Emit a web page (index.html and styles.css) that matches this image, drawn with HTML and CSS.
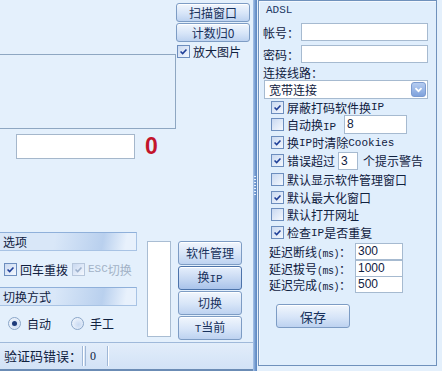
FILE: index.html
```html
<!DOCTYPE html>
<html lang="zh">
<head>
  <meta charset="UTF-8" />
  <title>ADSL</title>
  <link rel="stylesheet" href="styles.css">
</head>
<body>
  <div class="app">
    <div class="left">
      <div class="top">
        <div class="preview-wrap"><div class="preview"></div></div>
        <div class="tools">
          <button class="btn btn-top">扫描窗口</button>
          <button class="btn btn-top">计数归0</button>
          <label class="check"><span class="cb on"><svg viewBox="0 0 13 13"><path d="M3 6.5l2.5 2.5 4.5-5" /></svg></span>放大图片</label>
        </div>
      </div>

      <div class="count-row">
        <div class="code-input"></div>
        <span class="count">0</span>
      </div>

      <div class="bottom">
        <div class="groups">
          <div class="group-head">选项</div>
          <div class="group-body">
            <label class="check"><span class="cb on"><svg viewBox="0 0 13 13"><path d="M3 6.5l2.5 2.5 4.5-5" /></svg></span>回车重拨</label>
            <label class="check disabled"><span class="cb on"><svg viewBox="0 0 13 13"><path d="M3 6.5l2.5 2.5 4.5-5" /></svg></span><span class="mono">ESC</span>切换</label>
          </div>
          <div class="group-head">切换方式</div>
          <div class="group-body radios">
            <label class="radio"><span class="rb on"></span>自动</label>
            <label class="radio"><span class="rb"></span>手工</label>
          </div>
        </div>
        <div class="tall-box"></div>
        <div class="side-buttons">
          <button class="btn">软件管理</button>
          <button class="btn default">换<span class="mono">IP</span></button>
          <button class="btn">切换</button>
          <button class="btn"><span class="mono">T</span>当前</button>
        </div>
      </div>

      <div class="status">
        <div class="cell cell-label">验证码错误：</div>
        <div class="cell cell-num">0</div>
        <div class="cell cell-rest"></div>
      </div>
    </div>

    <div class="splitter"><div class="grip"></div></div>

    <div class="right">
      <div class="title mono">ADSL</div>
      <div class="field"><span class="label">帐号：</span><div class="input wide"></div></div>
      <div class="field"><span class="label">密码：</span><div class="input wide"></div></div>
      <div class="line-label">连接线路：</div>
      <div class="select">
        <span>宽带连接</span>
        <span class="drop"><svg viewBox="0 0 15 15"><path d="M4 6l3.5 3.5 3.5-3.5" /></svg></span>
      </div>

      <div class="options">
        <label class="check r1"><span class="cb on"><svg viewBox="0 0 13 13"><path d="M3 6.5l2.5 2.5 4.5-5" /></svg></span>屏蔽打码软件换<span class="mono">IP</span></label>
        <label class="check r2"><span class="cb"></span><span class="w-auto">自动换<span class="mono">IP</span></span><span class="input num-8">8</span></label>
        <label class="check r3"><span class="cb on"><svg viewBox="0 0 13 13"><path d="M3 6.5l2.5 2.5 4.5-5" /></svg></span>换<span class="mono">IP</span>时清除<span class="mono">Cookies</span></label>
        <label class="check r4"><span class="cb on"><svg viewBox="0 0 13 13"><path d="M3 6.5l2.5 2.5 4.5-5" /></svg></span>错误超过<span class="input num-3">3</span>个提示警告</label>
        <label class="check r5"><span class="cb"></span>默认显示软件管理窗口</label>
        <label class="check r6"><span class="cb on"><svg viewBox="0 0 13 13"><path d="M3 6.5l2.5 2.5 4.5-5" /></svg></span>默认最大化窗口</label>
        <label class="check r7"><span class="cb"></span>默认打开网址</label>
        <label class="check r8"><span class="cb on"><svg viewBox="0 0 13 13"><path d="M3 6.5l2.5 2.5 4.5-5" /></svg></span>检查<span class="mono">IP</span>是否重复</label>
      </div>

      <div class="delays">
        <div class="delay"><span class="delay-label">延迟断线<span class="mono ms">(ms)</span>：</span><span class="input">300</span></div>
        <div class="delay"><span class="delay-label">延迟拔号<span class="mono ms">(ms)</span>：</span><span class="input">1000</span></div>
        <div class="delay"><span class="delay-label">延迟完成<span class="mono ms">(ms)</span>：</span><span class="input">500</span></div>
      </div>

      <button class="btn save">保存</button>
    </div>
  </div>
</body>
</html>
```

FILE: styles.css
```css
body {
  margin: 0;
  width: 442px;
  height: 371px;
  overflow: hidden;
  background: #e4f0fc;
  font-family: "Noto Sans CJK SC", sans-serif;
  font-size: 12px;
  color: #10213f;
  white-space: nowrap;
}
.mono {
  font-family: "Liberation Mono", "Noto Sans CJK SC", monospace;
  font-size: 11px;
}
.app {
  display: flex;
  height: 371px;
}
.left {
  width: 253px;
  display: flex;
  flex-direction: column;
}
.top {
  display: flex;
  height: 130px;
}
.preview-wrap {
  width: 176px;
  padding-top: 54px;
}
.preview {
  height: 73px;
  border: 1px solid #8ea7c2;
  border-left: none;
}
.tools {
  width: 74px;
  padding-top: 3px;
  display: flex;
  flex-direction: column;
}
.btn {
  font-family: "Noto Sans CJK SC", sans-serif;
  font-size: 12px;
  color: #17315c;
  border: 1px solid #7d9cc4;
  border-radius: 3px;
  background: linear-gradient(#f1f6fd, #d7e5f8 55%, #bdd2f0);
  padding: 0;
  line-height: 1;
  box-sizing: border-box;
  box-shadow: inset 0 1px 0 #fff;
}
.btn-top {
  height: 19px;
  margin-bottom: 1px;
}
.check {
  display: flex;
  align-items: center;
}
.tools .check {
  margin-top: 1px;
  padding-left: 1px;
  height: 14px;
}
.cb {
  width: 11px;
  height: 11px;
  border: 1px solid #6d8ebe;
  background: linear-gradient(135deg, #c9d9f1, #f4f8fe);
  margin-right: 3px;
  flex: none;
  display: flex;
}
.cb svg {
  width: 11px;
  height: 11px;
}
.cb path {
  fill: none;
  stroke: #1f3f98;
  stroke-width: 1.8;
}
.count-row {
  display: flex;
  align-items: center;
  padding-left: 16px;
  margin-top: 3px;
  height: 26px;
}
.code-input {
  width: 117px;
  height: 23px;
  background: #fff;
  border: 1px solid #a5b7cb;
}
.count {
  margin-left: 10px;
  font-family: "Liberation Sans", sans-serif;
  font-weight: bold;
  font-size: 23px;
  color: #c3152b;
}
.bottom {
  display: flex;
  margin-top: 73px;
  height: 109px;
}
.groups {
  width: 137px;
}
.group-head {
  height: 17px;
  line-height: 17px;
  padding-left: 3px;
  border-top: 1px solid #8fb0da;
  border-bottom: 1px solid #a8c3e4;
  border-right: 1px solid #a8c3e4;
  background: linear-gradient(100deg, #d9e7f8 40%, #b9d0ee 75%, #e8f1fc 92%);
}
.group-body {
  height: 36px;
  display: flex;
  align-items: center;
  padding-left: 4px;
  gap: 4px;
}
.group-body .check.disabled {
  color: #a2b2c6;
}
.disabled .cb {
  border-color: #b7c7dc;
}
.disabled .cb path {
  stroke: #9cb0cc;
}
.radios {
  height: 35px;
  padding-left: 8px;
  gap: 20px;
}
.radio {
  display: flex;
  align-items: center;
}
.rb {
  width: 11px;
  height: 11px;
  border: 1px solid #8aa6c8;
  border-radius: 50%;
  background: radial-gradient(circle at 60% 60%, #c9daf2, #fafcff);
  margin-right: 6px;
  position: relative;
}
.rb.on::after {
  content: "";
  position: absolute;
  left: 3px;
  top: 3px;
  width: 5px;
  height: 5px;
  border-radius: 50%;
  background: #1d3a7a;
}
.tall-box {
  width: 22px;
  height: 94px;
  margin: 9px 0 0 10px;
  background: #fff;
  border: 1px solid #a9bdd3;
}
.side-buttons {
  margin: 9px 0 0 7px;
  width: 64px;
  display: flex;
  flex-direction: column;
  gap: 1px;
}
.side-buttons .btn {
  height: 24px;
}
.btn.default {
  border-color: #4c73aa;
  background: linear-gradient(#e6effc, #c6d8f2 55%, #a9c3ea);
}
.status {
  display: flex;
  height: 29px;
  margin-top: 1px;
  border-top: 1px solid #9fb9da;
  border-bottom: 2px solid #6b8cb5;
  background: linear-gradient(#e2edfa, #d2e2f6);
  box-sizing: border-box;
  padding-top: 3px;
}
.cell {
  height: 20px;
  line-height: 20px;
  border-right: 1px solid #9fb7d6;
  box-shadow: 1px 0 0 #fff;
  padding-left: 4px;
}
.cell-label {
  width: 78px;
  font-size: 13px;
}
.cell-num {
  width: 17px;
  margin-left: 2px;
  border-left: 1px solid #9fb7d6;
  font-family: "Liberation Serif", serif;
}
.cell-rest {
  flex: 1;
  border-right: none;
}
.splitter {
  width: 4px;
  background: linear-gradient(to right, #a8c4ea, #6f97cc 60%, #5d86bf);
  display: flex;
  align-items: center;
}
.grip {
  width: 2px;
  height: 20px;
  margin-left: 1px;
  background: repeating-linear-gradient(#e5eefb 0 1px, transparent 1px 3px);
}
.right {
  width: 173px;
  height: 364px;
  margin-left: 1px;
  border: 1px solid #6f91bc;
  box-shadow: inset 1px 1px 0 #f4f8fe;
  background: #e0eefc;
  padding-left: 4px;
  display: flex;
  flex-direction: column;
}
.title {
  height: 18px;
  line-height: 18px;
  padding-left: 3px;
  color: #1c3764;
}
.field {
  display: flex;
  align-items: center;
  margin-top: 4px;
  height: 18px;
}
.label {
  width: 38px;
  font-size: 12px;
}
.input {
  background: #fff;
  border: 1px solid #a6bad0;
  box-sizing: border-box;
  font-family: "Liberation Sans", sans-serif;
  font-size: 12px;
  padding-left: 2px;
  line-height: 16px;
}
.input.wide {
  width: 127px;
  height: 18px;
}
.line-label {
  height: 15px;
  line-height: 15px;
  margin-top: 2px;
  font-size: 12px;
}
.select {
  display: flex;
  align-items: center;
  justify-content: space-between;
  width: 164px;
  height: 19px;
  margin-left: 1px;
  box-sizing: border-box;
  border: 1px solid #a6bad0;
  background: #fff;
  padding: 0 1px 0 4px;
  font-size: 12px;
}
.drop {
  width: 15px;
  height: 15px;
  border-radius: 3px;
  background: linear-gradient(#b6cdf1, #7fa2dc);
  border: 1px solid #7c9bd0;
  box-sizing: border-box;
  display: flex;
}
.drop svg {
  width: 13px;
  height: 13px;
}
.drop path {
  fill: none;
  stroke: #fff;
  stroke-width: 2;
}
.options {
  padding-left: 8px;
}
.r1 { height: 16px; }
.r2 { height: 19px; }
.r3 { height: 17px; }
.r4 { height: 19px; }
.r5 { height: 18px; }
.r6 { height: 18px; }
.r7 { height: 17px; }
.r8 { height: 19px; }
.w-auto {
  width: 57px;
}
.num-8 {
  width: 63px;
  height: 19px;
}
.num-3 {
  width: 20px;
  height: 18px;
  margin: 0 5px 0 3px;
}
.delays {
  margin-top: 1px;
  padding-left: 6px;
}
.delay {
  display: flex;
  align-items: center;
  height: 16px;
}
.delay:first-child {
  height: 17px;
}
.delay-label {
  width: 86px;
}
.ms {
  font-size: 10px;
  letter-spacing: -0.5px;
}
.delay .input {
  width: 48px;
  height: 17px;
  line-height: 15px;
}
.btn.save {
  width: 74px;
  height: 24px;
  margin: 12px 0 0 13px;
  font-size: 13px;
}
```
